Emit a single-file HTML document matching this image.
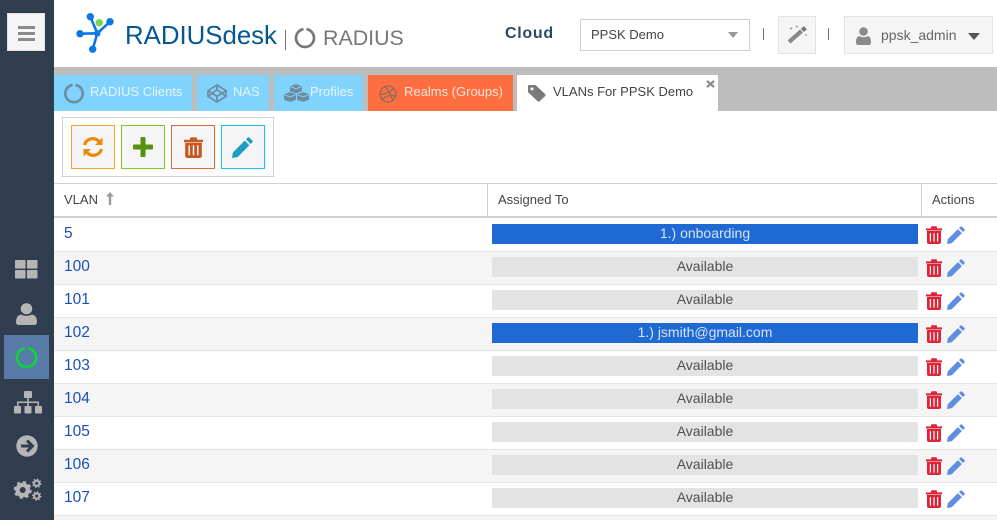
<!DOCTYPE html>
<html><head><meta charset="utf-8"><style>
html,body{margin:0;padding:0;width:997px;height:520px;overflow:hidden;background:#fff;font-family:"Liberation Sans",sans-serif;color:#444}
div,svg,span{position:absolute;box-sizing:border-box}
.t{white-space:nowrap;line-height:16px}
.tab{top:75px;height:36px}
.tl{top:84px;font-size:13px;color:#e8f4fb;white-space:nowrap;line-height:16px}
.btn{top:125px;width:44px;height:44px;background:#f5f5f5;border:1px solid}
.row{left:54px;width:943px;height:33px;border-bottom:1px solid #e4e4e4}
.id{left:10px;top:7px;font-size:15.5px;color:#1a4fb8;line-height:16px}
.bar{left:438px;top:5px;width:426px;height:20px;text-align:center;font-size:14px;line-height:19px;background:#e3e3e3;color:#505050}
.bl{background:#1f69d3;color:#d5e4f8}
.tr{left:872px;top:7px;width:16px;height:18px;fill:#dc2538}
.pe{left:893px;top:7px;width:18px;height:18px;fill:#5f8de0}
</style></head><body>
<svg width="0" height="0" style="left:0;top:0"><defs>
<symbol id="trash" viewBox="0 0 16 19" preserveAspectRatio="none"><path fill-rule="evenodd" d="M0 2.500h5V1.300Q5 .3 6 .3h4q1 0 1 1V2.500h5v2.300H0ZM1 5.300h14v11.700q0 2-2 2H3q-2 0-2-2ZM3.800 7.500v9h1.200v-9ZM7.400 7.500v9h1.200v-9ZM11 7.500v9h1.200v-9Z"/></symbol>
<symbol id="pen" viewBox="0 0 19 19"><path d="M0 19l.8-5L11.500 3.300l4.200 4.200L5 18.200ZM12.700 2.100l1.500-1.500q.8-.8 1.600 0l2.600 2.600q.8.800 0 1.600l-1.500 1.500Z"/></symbol>
</defs></svg>

<div style="left:0;top:0;width:54px;height:520px;background:#303d4e"></div>
<div style="left:7px;top:13px;width:38px;height:38px;background:#f5f5f5;border:1px solid #e3e3e3"></div>
<div style="left:18px;top:26px;width:17px;height:3px;background:#8a8a8a"></div>
<div style="left:18px;top:32px;width:17px;height:3px;background:#8a8a8a"></div>
<div style="left:18px;top:38px;width:17px;height:3px;background:#8a8a8a"></div>

<svg style="left:15px;top:260px" width="23" height="19" viewBox="0 0 24 21" preserveAspectRatio="none" fill="#b5b5b5"><rect width="11" height="9.500" rx="1"/><rect x="12.500" width="11" height="9.500" rx="1"/><rect y="11" width="11" height="9.500" rx="1"/><rect x="12.500" y="11" width="11" height="9.500" rx="1"/></svg>
<svg style="left:16px;top:303px" width="21" height="22" viewBox="0 0 21 23" preserveAspectRatio="none" fill="#b5b5b5"><circle cx="10.500" cy="6" r="5.800"/><path d="M0 20q0-7 5-8 5 3 11 0 5 1 5 8 0 3-3 3H3q-3 0-3-3Z"/></svg>
<div style="left:4px;top:335px;width:45px;height:44px;background:#587ba8"></div>
<svg style="left:15px;top:346px" width="23" height="23" viewBox="0 0 23 23"><path d="M13 2.120A9.500 9.500 0 1 1 10 2.120" fill="none" stroke="#0fd13f" stroke-width="2.800"/></svg>
<svg style="left:14px;top:391px" width="28" height="23" viewBox="0 0 28 23" fill="#b5b5b5"><rect x="10" width="8" height="7" rx="1"/><rect y="15" width="7" height="7.500" rx="1"/><rect x="10.500" y="15" width="7" height="7.500" rx="1"/><rect x="21" y="15" width="7" height="7.500" rx="1"/><path d="M13.200 7h1.600v3.500H25V15h-1.500v-3H14.800v3h-1.600v-3H4.500v3H3v-4.500h10.200Z"/></svg>
<svg style="left:15.500px;top:435px" width="22" height="22" viewBox="0 0 22 22"><circle cx="11" cy="11" r="10.700" fill="#b5b5b5"/><path d="M5 11h11M11 5.500l5.500 5.500L11 16.500" fill="none" stroke="#303d4e" stroke-width="3"/></svg>
<svg style="left:12px;top:478px" width="30" height="26" viewBox="0 0 30 26" fill="none" stroke="#b5b5b5"><circle cx="10.700" cy="12" r="5.200" stroke-width="4.400"/><circle cx="10.700" cy="12" r="7.800" stroke-width="2.400" stroke-dasharray="3 3.130"/><circle cx="24.700" cy="5.300" r="2.600" stroke-width="2"/><circle cx="24.700" cy="5.300" r="4" stroke-width="1.400" stroke-dasharray="1.600 1.540"/><circle cx="24.700" cy="18" r="2.600" stroke-width="2"/><circle cx="24.700" cy="18" r="4" stroke-width="1.400" stroke-dasharray="1.600 1.540"/></svg>

<svg style="left:75px;top:12px" width="40" height="42" viewBox="0 0 40 42"><g stroke="#0b78e3" stroke-width="2.600" fill="none"><path d="M15.300 4.700L22.300 21.300M35 9.700L22.300 21.300M5 21.700L22.300 21.300M22.300 21.300L17.700 37.300"/></g><g fill="#0b78e3"><circle cx="15.300" cy="4.700" r="3.700"/><circle cx="35" cy="9.700" r="3.700"/><circle cx="5" cy="21.700" r="3.700"/><circle cx="22.300" cy="21.300" r="3.200"/><circle cx="17.700" cy="37.300" r="3.700"/></g><circle cx="24.300" cy="10.700" r="3.700" fill="#7fd353"/></svg>
<div class="t" style="left:125px;top:21px;font-size:25.800px;line-height:30px;color:#04588f">RADIUSdesk</div>
<div style="left:285px;top:30px;width:1px;height:20px;background:#777"></div>
<svg style="left:294px;top:27px" width="22" height="22" viewBox="0 0 22 22"><path d="M12.500 2.130A9 9 0 1 1 9.500 2.130" fill="none" stroke="#777" stroke-width="2.700"/></svg>
<div class="t" style="left:323px;top:25px;font-size:21.400px;line-height:26px;color:#777">RADIUS</div>

<div class="t" style="left:505px;top:26px;font-size:16px;font-weight:bold;letter-spacing:.7px;color:#2c4a63">Cloud</div>
<div style="left:580px;top:19px;width:170px;height:32px;border:1px solid #d0d0d0;background:#fff"></div>
<div class="t" style="left:591px;top:27px;font-size:13px;color:#444">PPSK Demo</div>
<div style="left:728px;top:32px;border-left:5px solid transparent;border-right:5px solid transparent;border-top:6px solid #999"></div>
<div style="left:763px;top:28px;width:1px;height:12px;background:#777"></div>
<div style="left:778px;top:16px;width:38px;height:38px;background:#f5f5f5;border:1px solid #e3e3e3"></div>
<svg style="left:787px;top:25px" width="21" height="20" viewBox="0 0 21 20"><path d="M2 17L14.500 6" stroke="#8a8a8a" stroke-width="4.200" fill="none"/><path d="M15.300 5.300L18.500 2.800" stroke="#777" stroke-width="4.200" fill="none"/><path d="M4 2v3M2.500 3.500h3M10 .5v2.400M8.800 1.700h2.400M19 9v2M18 10h2" stroke="#999" stroke-width=".8" fill="none"/></svg>
<div style="left:828px;top:28px;width:1px;height:12px;background:#777"></div>
<div style="left:844px;top:16px;width:149px;height:38px;background:#f5f5f5;border:1px solid #e3e3e3"></div>
<svg style="left:856px;top:27px" width="15" height="18" viewBox="0 0 15 18" fill="#8a8a8a"><circle cx="7.500" cy="4.500" r="4.300"/><path d="M0 15q0-5 3-6 4.500 2.500 9 0 3 1 3 6 0 3-2 3H2q-2 0-2-3Z"/></svg>
<div class="t" style="left:881px;top:27px;font-size:14px;color:#666">ppsk_admin</div>
<div style="left:968px;top:33px;border-left:6px solid transparent;border-right:6px solid transparent;border-top:7px solid #555"></div>

<div style="left:54px;top:67px;width:943px;height:44px;background:#bdbdbd"></div>
<div class="tab" style="left:54px;width:138px;background:#80d3fd"></div>
<div class="tab" style="left:197px;width:72px;background:#80d3fd"></div>
<div class="tab" style="left:274px;width:89px;background:#80d3fd"></div>
<div class="tab" style="left:368px;width:145px;background:#ff6e40"></div>
<div class="tab" style="left:517px;width:201px;background:#fff"></div>
<svg style="left:64px;top:83px" width="20" height="21" viewBox="0 0 20 21"><path d="M11.500 1.930A8.700 8.700 0 1 1 8.500 1.930" fill="none" stroke="#6c8c9f" stroke-width="2.600"/></svg>
<div class="tl" style="left:90px">RADIUS Clients</div>
<svg style="left:207px;top:84px" width="20" height="19" viewBox="0 0 20 20" preserveAspectRatio="none" fill="none" stroke="#6c8c9f" stroke-width="1.700"><path d="M10 1l9 6v6l-9 6-9-6V7ZM1 7l9 6 9-6M10 1v5M10 13v6M1 13l9-7 9 7"/></svg>
<div class="tl" style="left:233px">NAS</div>
<svg style="left:284px;top:84px" width="25" height="18" viewBox="0 0 25 20" preserveAspectRatio="none" fill="#6c8c9f"><path d="M12 0l6 2.500v5.500l-6 2.500-6-2.500V2.500ZM6 9l6 2.500v6L6 20l-6-2.500v-6ZM19 9l6 2.500v6L19 20l-6-2.500v-6Z"/><path d="M6.500 3l5.500 2.300L17.500 3M.5 12l5.500 2.300 5.500-2.300M13.500 12l5.500 2.300 5.500-2.300" stroke="#80d3fd" fill="none"/></svg>
<div class="tl" style="left:310px">Profiles</div>
<svg style="left:379px;top:84.500px" width="18" height="18" viewBox="0 0 18 18" fill="none" stroke="#8e6a5c" stroke-width="1.300"><circle cx="9" cy="9" r="8"/><path d="M6 1.500C10 6 13 11 13.500 16M1 9.500C6 9.500 12 7 14.500 3M3.500 15C6 11 11 9.500 17 11"/></svg>
<div class="tl" style="left:404px;color:#ffe3d8">Realms (Groups)</div>
<svg style="left:528px;top:85px" width="18" height="17" viewBox="0 0 18 18" preserveAspectRatio="none"><path fill-rule="evenodd" fill="#7a7a7a" d="M0 1.500Q0 0 1.500 0H7.500L17.300 9.800Q18 10.700 17.300 11.500L11.500 17.300Q10.700 18 9.800 17.300L0 7.500ZM4 2.500a1.600 1.600 0 1 0 .01 0Z"/></svg>
<div class="t" style="left:553px;top:84px;font-size:13px;color:#444">VLANs For PPSK Demo</div>
<svg style="left:706px;top:80px" width="9" height="8" viewBox="0 0 9 9" preserveAspectRatio="none"><path d="M1 1l7 7M8 1L1 8" stroke="#8a8a8a" stroke-width="2.300"/></svg>

<div style="left:62px;top:117px;width:212px;height:60px;border:1px solid #d0d0d0;background:#fff"></div>
<div class="btn" style="left:71px;border-color:#f5a335"></div>
<div class="btn" style="left:121px;border-color:#7ccc1c"></div>
<div class="btn" style="left:171px;border-color:#d2703c"></div>
<div class="btn" style="left:221px;border-color:#1ec0e8"></div>
<svg style="left:82px;top:136px" width="22" height="22" viewBox="0 0 22 22" fill="none" stroke="#ea8a0c" stroke-width="3.200"><path d="M2.500 9A8.500 8.500 0 0 1 17 5.500M19.500 13A8.500 8.500 0 0 1 5 16.500"/><path d="M20.500 1.500v7.500H13ZM1.500 20.500V13H9Z" fill="#ea8a0c" stroke="none"/></svg>
<svg style="left:133px;top:137px" width="20" height="20" viewBox="0 0 20 20"><path d="M7.500 1q0-1 1-1h3q1 0 1 1v6.500H19q1 0 1 1v3q0 1-1 1h-6.500V19q0 1-1 1h-3q-1 0-1-1v-6.500H1q-1 0-1-1v-3q0-1 1-1h6.500Z" fill="#53910f"/></svg>
<svg style="left:184px;top:137px;fill:#c65a22" width="19" height="21"><use href="#trash" width="19" height="21"/></svg>
<svg style="left:232px;top:137px;fill:#1b9dc4" width="21" height="21"><use href="#pen" width="21" height="21"/></svg>

<div style="left:54px;top:183px;width:943px;height:35px;border-top:1px solid #d0d0d0;border-bottom:2px solid #d0d0d0;background:#fff"></div>
<div style="left:487px;top:184px;width:1px;height:32px;background:#d0d0d0"></div>
<div style="left:921px;top:184px;width:1px;height:32px;background:#d0d0d0"></div>
<div class="t" style="left:64px;top:192px;font-size:13px">VLAN</div>
<svg style="left:106px;top:192px" width="8" height="13" viewBox="0 0 8 13"><path d="M4 0L8 4.500H5.200V13H2.800V4.500H0Z" fill="#999"/></svg>
<div class="t" style="left:498px;top:192px;font-size:13px">Assigned To</div>
<div class="t" style="left:932px;top:192px;font-size:13px">Actions</div>

<div class="row" style="top:219px;background:#fff"><div class="id">5</div><div class="bar bl">1.) onboarding</div><svg class="tr"><use href="#trash"/></svg><svg class="pe"><use href="#pen"/></svg></div>
<div class="row" style="top:252px;background:#f5f5f5"><div class="id">100</div><div class="bar">Available</div><svg class="tr"><use href="#trash"/></svg><svg class="pe"><use href="#pen"/></svg></div>
<div class="row" style="top:285px;background:#fff"><div class="id">101</div><div class="bar">Available</div><svg class="tr"><use href="#trash"/></svg><svg class="pe"><use href="#pen"/></svg></div>
<div class="row" style="top:318px;background:#f5f5f5"><div class="id">102</div><div class="bar bl">1.) jsmith@gmail.com</div><svg class="tr"><use href="#trash"/></svg><svg class="pe"><use href="#pen"/></svg></div>
<div class="row" style="top:351px;background:#fff"><div class="id">103</div><div class="bar">Available</div><svg class="tr"><use href="#trash"/></svg><svg class="pe"><use href="#pen"/></svg></div>
<div class="row" style="top:384px;background:#f5f5f5"><div class="id">104</div><div class="bar">Available</div><svg class="tr"><use href="#trash"/></svg><svg class="pe"><use href="#pen"/></svg></div>
<div class="row" style="top:417px;background:#fff"><div class="id">105</div><div class="bar">Available</div><svg class="tr"><use href="#trash"/></svg><svg class="pe"><use href="#pen"/></svg></div>
<div class="row" style="top:450px;background:#f5f5f5"><div class="id">106</div><div class="bar">Available</div><svg class="tr"><use href="#trash"/></svg><svg class="pe"><use href="#pen"/></svg></div>
<div class="row" style="top:483px;background:#fff"><div class="id">107</div><div class="bar">Available</div><svg class="tr"><use href="#trash"/></svg><svg class="pe"><use href="#pen"/></svg></div>
<div style="left:54px;top:516px;width:943px;height:4px;background:#f5f5f5"></div>
</body></html>
